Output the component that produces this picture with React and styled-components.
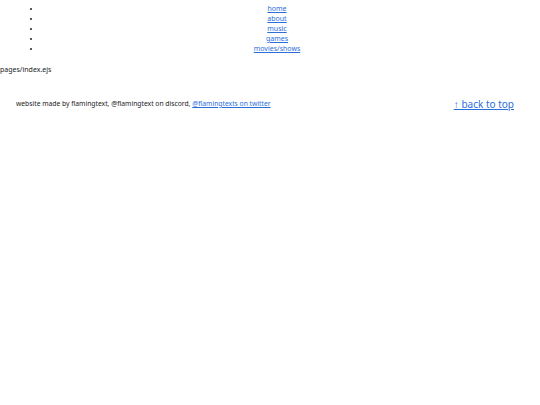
import React from "react";
import styled, { createGlobalStyle } from "styled-components";

const GlobalStyle = createGlobalStyle`
    body {
        margin: 0;
        background: #fff;
        font-family: "Noto Sans", "Open Sans", sans-serif;
        font-size: 7px;
        color: #222;
    }
`;

const NavList = styled.ul`
    margin: 4px 27px 0 0;
    padding-left: 41px;
    list-style: disc;
`;

const NavItem = styled.li`
    text-align: center;
    line-height: 10px;
    height: 10px;
`;

const Link = styled.a`
    color: #2a6edb;
    text-decoration: underline;
`;

const PagePath = styled.p`
    margin: 11px 0 0;
    line-height: 10px;
`;

const Footer = styled.footer`
    display: flex;
    justify-content: space-between;
    align-items: center;
    padding: 0 26px 0 16px;
    margin-top: 22px;
`;

const Credit = styled.span`
    font-size: 6.75px;
    line-height: 10px;
`;

const BackToTop = styled.a`
    color: #2a6edb;
    font-size: 10px;
    text-decoration: underline;
`;

const links = ["home", "about", "music", "games", "movies/shows"];

function App() {
    return (
        <>
            <GlobalStyle />
            <NavList>
                {links.map((l) => (
                    <NavItem key={l}>
                        <Link href="#">{l}</Link>
                    </NavItem>
                ))}
            </NavList>
            <PagePath>pages/index.ejs</PagePath>
            <Footer>
                <Credit>
                    website made by flamingtext, @flamingtext on discord,{" "}
                    <Link href="#">@flamingtexts on twitter</Link>
                </Credit>
                <BackToTop href="#">↑ back to top</BackToTop>
            </Footer>
        </>
    );
}

export default App;
